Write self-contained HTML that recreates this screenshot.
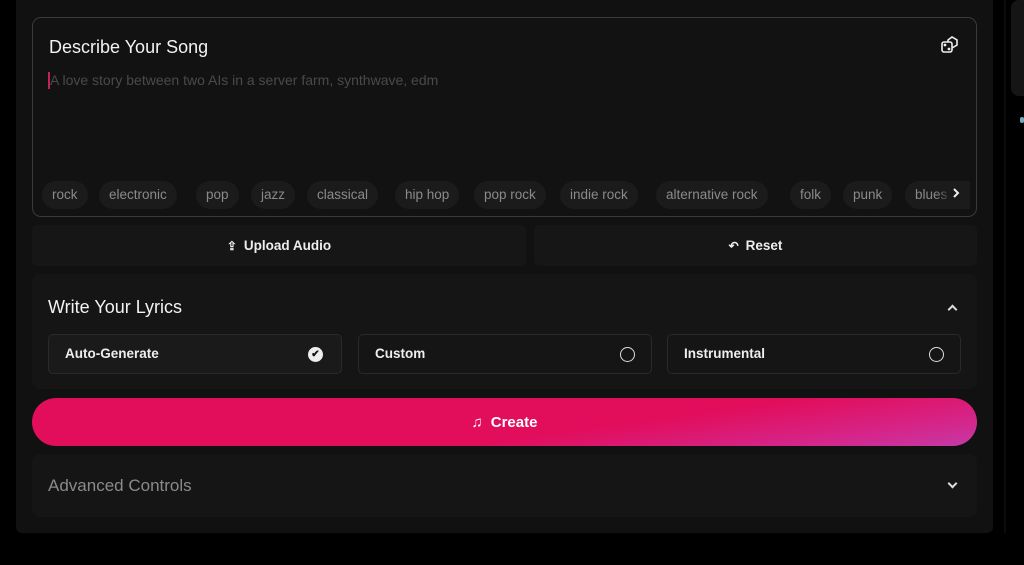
<!DOCTYPE html>
<html><head><style>
*{box-sizing:border-box;margin:0;padding:0}
body{width:1024px;height:565px;background:#000;font-family:"Liberation Sans",sans-serif;position:relative;overflow:hidden;color:#eee}
.a{position:absolute}
.panel{left:16px;top:0;width:977px;height:533px;background:#111;border-radius:0 0 6px 6px}
.box{left:32px;top:17px;width:945px;height:200px;border:1px solid #3a3a3a;border-radius:9px;background:#121212}
.chip{position:absolute;top:181px;height:28px;border-radius:14px;background:#1b1b1b;color:#8a8a8a;font-size:13.5px;line-height:28px;padding:0 10px}
.btn{top:225px;height:41px;background:#161616;border-radius:5px;font-size:13.5px;font-weight:bold;color:#eee;display:flex;align-items:center;justify-content:center;gap:7px}
.card{left:32px;width:945px;background:#151515;border-radius:8px}
.opt{position:absolute;top:60px;width:294px;height:40px;border:1px solid #2a2a2a;border-radius:5px;background:#151515;font-size:13.5px;font-weight:bold;color:#eee;padding-left:16px;line-height:38px}
.rad{position:absolute;right:16px;top:12px;width:15px;height:15px;border:1.5px solid #ddd;border-radius:50%}
</style></head><body>
<div class="a panel"></div>
<div class="a" style="left:1004px;top:0;width:2px;height:533px;background:#0c0c0c"></div>
<div class="a" style="left:1011px;top:0;width:20px;height:96px;background:#151515;border-radius:8px"></div>
<div class="a" style="left:1020px;top:117px;width:4px;height:6px;background:#7ab;border-radius:2px"></div>
<div class="a box">
 <div class="a" style="left:16px;top:19px;font-size:18px;color:#f2f2f2">Describe Your Song</div>
 <svg class="a" style="left:906px;top:16px" width="22" height="22" viewBox="0 0 22 22" fill="none" stroke="#eee" stroke-width="1.6"><rect x="3" y="8" width="10" height="10" rx="2"/><path d="M9 8V6l4-3 5 3v5l-5 3"/><circle cx="6" cy="11" r=".6" fill="#eee"/><circle cx="10" cy="15" r=".6" fill="#eee"/></svg>
 <div class="a" style="left:15px;top:54px;width:2px;height:17px;background:#c0225a"></div>
 <div class="a" style="left:17px;top:54px;font-size:14px;color:#4a4a4a">A love story between two AIs in a server farm, synthwave, edm</div>
</div>
<div class="chip" style="left:42px">rock</div>
<div class="chip" style="left:99px">electronic</div>
<div class="chip" style="left:196px">pop</div>
<div class="chip" style="left:251px">jazz</div>
<div class="chip" style="left:307px">classical</div>
<div class="chip" style="left:395px">hip hop</div>
<div class="chip" style="left:474px">pop rock</div>
<div class="chip" style="left:560px">indie rock</div>
<div class="chip" style="left:656px">alternative rock</div>
<div class="chip" style="left:790px">folk</div>
<div class="chip" style="left:843px">punk</div>
<div class="chip" style="left:905px;width:60px;overflow:hidden;white-space:nowrap">blues</div>
<div class="a" style="left:936px;top:181px;width:34px;height:28px;background:linear-gradient(90deg,rgba(27,27,27,0),#1b1b1b 50%)"></div>
<svg class="a" style="left:951px;top:187px" width="10" height="12" viewBox="0 0 10 12" fill="none" stroke="#eee" stroke-width="2"><path d="M3 2l4 4-4 4"/></svg>
<div class="a btn" style="left:32px;width:494px"><span style="font-size:12px">⇪</span>Upload Audio</div>
<div class="a btn" style="left:534px;width:443px"><span style="font-size:12px">↶</span>Reset</div>
<div class="a card" style="top:274px;height:115px">
 <div class="a" style="left:16px;top:23px;font-size:18px;color:#f2f2f2">Write Your Lyrics</div>
 <div class="a" style="left:917px;top:32px;width:7px;height:7px;border-left:2px solid #ddd;border-top:2px solid #ddd;transform:rotate(45deg)"></div>
 <div class="opt" style="left:16px;background:#1a1a1a">Auto-Generate<div class="a" style="right:18px;top:12px;width:15px;height:15px;border-radius:50%;background:#eee;color:#111;font-size:10px;line-height:15px;text-align:center">✔</div></div>
 <div class="opt" style="left:326px">Custom<div class="rad"></div></div>
 <div class="opt" style="left:635px">Instrumental<div class="rad"></div></div>
</div>
<div class="a" style="left:32px;top:398px;width:945px;height:48px;border-radius:24px;background:linear-gradient(172deg,#e20d5b 0%,#e20d5b 60%,#d5258a 85%,#c43aa6 100%);display:flex;align-items:center;justify-content:center;gap:8px;font-size:15px;font-weight:bold;color:#fff"><span style="font-size:15px">♫</span>Create</div>
<div class="a card" style="top:454px;height:63px">
 <div class="a" style="left:16px;top:22px;font-size:17px;color:#8a8a8a">Advanced Controls</div>
 <div class="a" style="left:917px;top:26px;width:7px;height:7px;border-right:2px solid #ddd;border-bottom:2px solid #ddd;transform:rotate(45deg)"></div>
</div>
</body></html>
